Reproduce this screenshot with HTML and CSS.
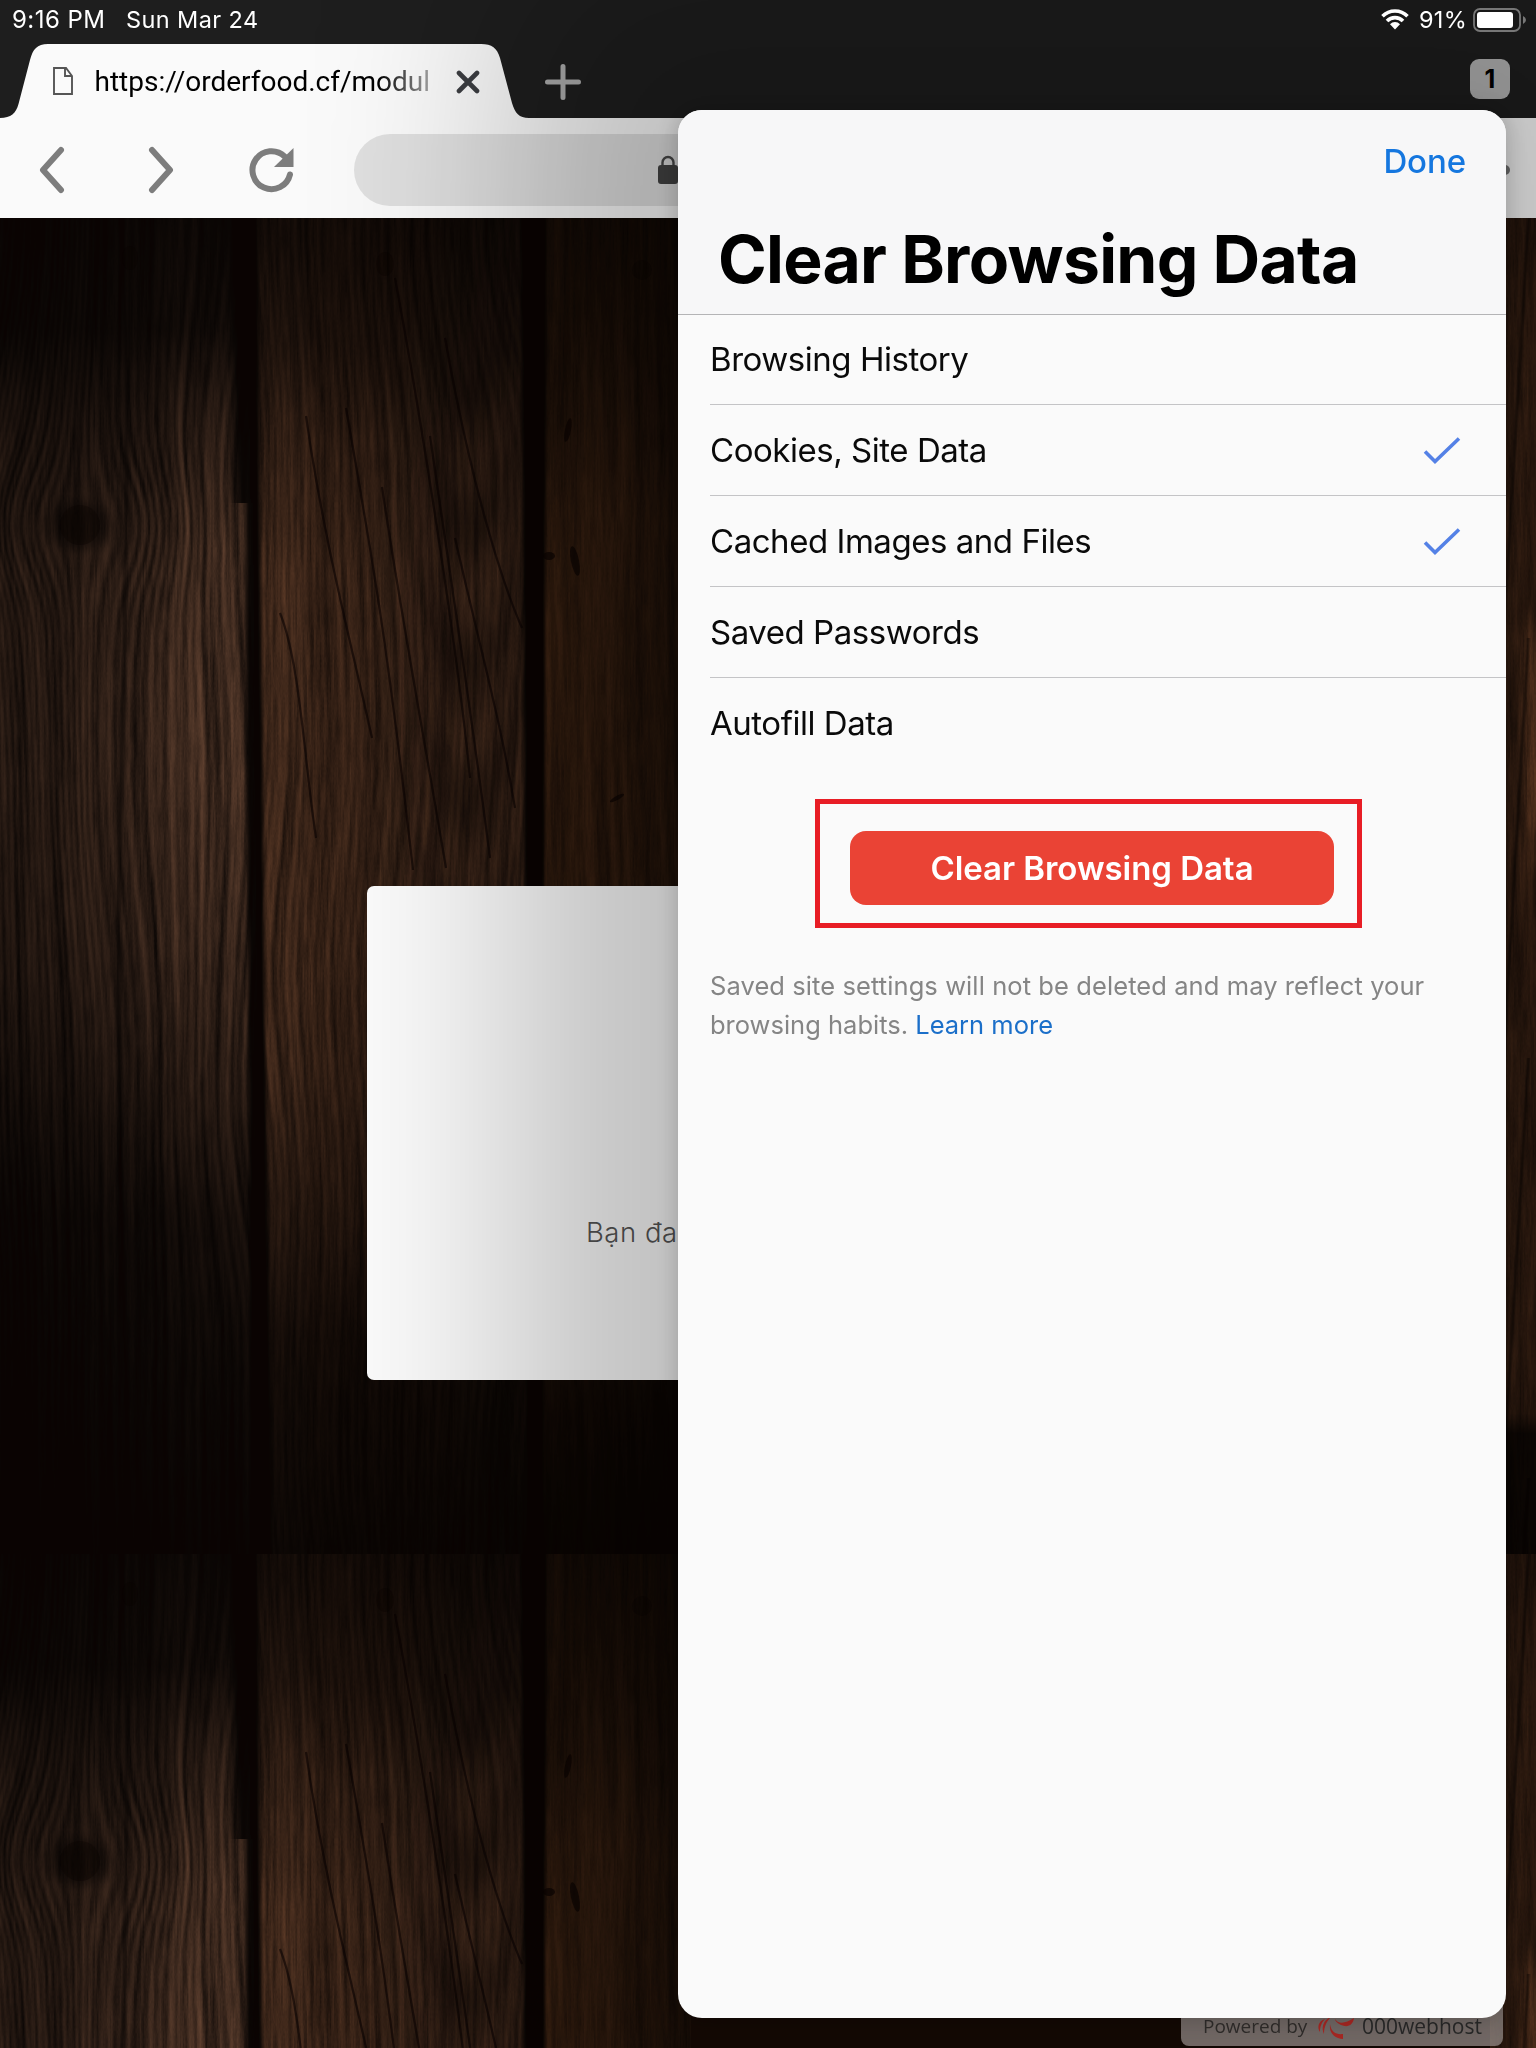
FILE: index.html
```html
<!DOCTYPE html>
<html lang="en">
<head>
<meta charset="utf-8">
<title>Clear Browsing Data</title>
<link rel="stylesheet" href="styles.css">
</head>
<body>
<div class="screen">
  <header class="chrome">
    <div class="status">
      <span class="time">9:16 PM</span>
      <span class="date">Sun Mar 24</span>
      <svg class="wifi" width="28" height="21" viewBox="0 0 28 21"><g fill="none" stroke="#fff" stroke-width="3.6"><path d="M1.5 7.2a17.6 17.6 0 0 1 25 0"/><path d="M6 12a11.2 11.2 0 0 1 16 0"/></g><path fill="#fff" d="M9 15.2a7 7 0 0 1 10 0L14 20.4z"/></svg>
      <span class="percent">91%</span>
      <svg class="battery" width="54" height="24" viewBox="0 0 54 24"><rect x="1" y="1" width="46" height="22" rx="6" fill="none" stroke="#777" stroke-width="1.8"/><rect x="4" y="4" width="36" height="16" rx="3" fill="#fff"/><path d="M50 8q3 1.500 3 4t-3 4z" fill="#777"/></svg>
    </div>
    <div class="tabs">
      <div class="tab">
        <svg class="tab-shape" width="530" height="75" viewBox="0 0 530 75"><path fill="#fafafa" d="M0 75V74C11 74 16 69 18.500 60L30 16C33 5 37 0 48 0H481C492 0 497 4 500 14L512 59C515 69 519 74 529 74V75z"/></svg>
        <svg class="doc" width="20" height="28" viewBox="0 0 20 28"><path d="M1 1h12l6 8v18H1zM12 1v8h7" fill="none" stroke="#555" stroke-width="1.9"/></svg>
        <span class="url">https://orderfood.cf/modul</span>
        <svg class="close" width="24" height="24" viewBox="0 0 24 24"><path d="M3 3l18 18M21 3L3 21" stroke="#3c3e42" stroke-width="4.600" stroke-linecap="round"/></svg>
      </div>
      <svg class="plus" width="36" height="36" viewBox="0 0 36 36"><path d="M18 2.500v31M2.500 18h31" stroke="#acacac" stroke-width="5" stroke-linecap="round"/></svg>
      <span class="count">1</span>
    </div>
    <div class="toolbar">
      <svg class="back" width="26" height="48" viewBox="0 0 26 48"><path d="M22 4L4 24l18 20" fill="none" stroke="#7d7d7d" stroke-width="6" stroke-linecap="round" stroke-linejoin="round"/></svg>
      <svg class="forward" width="26" height="48" viewBox="0 0 26 48"><path d="M4 4l18 20L4 44" fill="none" stroke="#7d7d7d" stroke-width="6" stroke-linecap="round" stroke-linejoin="round"/></svg>
      <svg class="reload" width="46" height="46" viewBox="0 0 46 46"><path d="M41 27.500A19 19 0 1 1 35.800 9.600" fill="none" stroke="#7d7d7d" stroke-width="6" stroke-linecap="round"/><path fill="#7d7d7d" d="M44.500 1v19H25z"/></svg>
      <div class="omnibox">
        <svg width="24" height="30" viewBox="0 0 24 30"><path d="M6.500 12V7.500a5.500 5.500 0 0 1 11 0V12" fill="none" stroke="#4a4a4a" stroke-width="2.400"/><rect x="2" y="10" width="20" height="19" rx="3" fill="#444"/></svg>
      </div>
      <i class="dot"></i>
    </div>
  </header>
  <main class="site">
    <canvas class="wood" width="1536" height="1830"></canvas>
    <section class="card"><p>Bạn đa</p></section>
    <div class="badge">
      <span>Powered by</span>
      <svg width="38" height="24" viewBox="0 0 38 24"><g fill="#d3322c"><path d="M8 3C1 5 0 12 3 16C3 10 5 6 8 3zM14 1C6 4 4 12 7 18C7 10 10 5 14 1z"/><path d="M13 8c-1 8 3 14 13 15l0-5C18 19 14 15 13 8z"/><path d="M18 3c3 5 10 5 19-1C36 9 31 12 24 9 20 7 18 5 18 3z"/></g></svg>
      <b>000webhost</b>
    </div>
  </main>
  <div class="dialog">
    <div class="dialog-head">
      <a class="done">Done</a>
      <h1>Clear Browsing Data</h1>
    </div>
    <ul class="options">
      <li><span>Browsing History</span></li>
      <li><span>Cookies, Site Data</span><svg width="38" height="28" viewBox="0 0 38 28"><path d="M2 15.500l10 10L36 2.500" fill="none" stroke="#5481e6" stroke-width="3.600"/></svg></li>
      <li><span>Cached Images and Files</span><svg width="38" height="28" viewBox="0 0 38 28"><path d="M2 15.500l10 10L36 2.500" fill="none" stroke="#5481e6" stroke-width="3.600"/></svg></li>
      <li><span>Saved Passwords</span></li>
      <li><span>Autofill Data</span></li>
    </ul>
    <div class="highlight"><button>Clear Browsing Data</button></div>
    <p class="note"><span class="first">Saved site settings will not be deleted and may reflect your</span><br>browsing habits. <a>Learn more</a></p>
  </div>
</div>
<script src="wood.js"></script>
</body>
</html>
```
FILE: styles.css
```css
* { box-sizing: border-box; }
body { margin: 0; font-family: Inter, "Liberation Sans", sans-serif; }
.screen { position: relative; width: 1536px; height: 2048px; overflow: hidden; background: #1e1e1e; display: flex; flex-direction: column; }
.chrome { flex: none; height: 218px; }
svg { display: block; flex: none; }

.status { position: relative; z-index: 2; height: 44px; display: flex; align-items: flex-start; color: #fff; font-size: 23px; line-height: 28px; padding: 6px 9px 0 12px; white-space: nowrap; }
.time { width: 114px; font-size: 24px; letter-spacing: 0.450px; }
.date { font-size: 23.500px; letter-spacing: 0.400px; }
.wifi { margin: 3px 10px 0 auto; }
.percent { width: 54px; font-size: 23.500px; letter-spacing: 0.300px; }
.battery { margin-top: 2px; }

.tabs { height: 74px; display: flex; align-items: flex-start; }
.tab { position: relative; width: 530px; height: 74px; display: flex; align-items: flex-start; padding-left: 53px; }
.tab-shape { position: absolute; left: 0; top: 0; }
.doc, .url, .close { position: relative; }
.doc { margin: 23px 21.500px 0 0; }
.url { width: 337.500px; font: 28px/34px Roboto, sans-serif; margin-top: 21px; white-space: nowrap; overflow: hidden; background: linear-gradient(90deg, #000 84%, #aaa 100%); background-clip: text; -webkit-background-clip: text; color: transparent; }
.close { margin: 26px 0 0 24px; }
.plus { margin: 20px 0 0 15px; }
.count { margin: 15px 26px 0 auto; width: 40px; height: 40px; border-radius: 9px; background: #b4b4b4; color: #000; font-size: 25px; font-weight: 700; line-height: 40px; text-align: center; }

.toolbar { height: 100px; background: #fafafa; display: flex; align-items: center; padding: 4px 0 0 39px; }
.forward { margin-left: 83px; }
.reload { margin-left: 75px; }
.omnibox { width: 1090px; height: 72px; margin-left: 59px; border-radius: 36px; background: #e0e0e0; display: flex; align-items: center; padding-left: 302px; }
.dot { width: 10px; height: 10px; border-radius: 5px; background: #777; margin-left: 56px; }

.site { position: relative; flex: 1; display: flex; flex-direction: column; align-items: center; background: #180b05; }
.wood { position: absolute; left: 0; top: 0; }
.card { position: relative; flex: none; width: 802px; height: 494px; margin-top: 668px; border-radius: 7px; background: #fcfcfc; padding: 328px 0 0 219px; }
.card p { margin: 0; font-size: 27.500px; font-weight: 300; line-height: 36px; color: #555; letter-spacing: 0.500px; }
.badge { position: absolute; right: 33px; bottom: 2px; width: 322px; height: 52px; border-radius: 8px; background: rgba(200, 190, 186, .68); display: flex; align-items: flex-end; padding: 0 0 6px 22px; font: 19px/28px "Open Sans", sans-serif; color: #3c3836; white-space: nowrap; }
.badge span { width: 114px; }
.badge b { margin-left: 7px; font-weight: 500; font-size: 21px; color: #333; }

.dialog { position: absolute; left: 678px; top: 110px; width: 828px; height: 1908px; border-radius: 24px; background: #fafafa; box-shadow: 0 0 200px 170px rgba(0, 0, 0, .235), 0 0 24px rgba(0, 0, 0, .22); }
.dialog-head { height: 205px; border-radius: 24px 24px 0 0; background: #f7f7f8; border-bottom: 1px solid #b4b4b6; display: flex; flex-direction: column; padding: 31px 40px 0 40px; }
.done { align-self: flex-end; font-size: 33px; line-height: 40px; font-weight: 550; color: #1577df; letter-spacing: -0.100px; }
h1 { margin: 38px 0 0; font-size: 66px; line-height: 80px; font-weight: 700; letter-spacing: -0.720px; color: #000; white-space: nowrap; }
.options { list-style: none; margin: 0; padding: 0 0 0 32px; }
.options li { height: 91px; display: flex; align-items: center; justify-content: space-between; padding: 0 45px 1px 0; border-bottom: 1px solid #c4c4c6; font-size: 33px; color: #0a0a0a; white-space: nowrap; letter-spacing: -0.460px; }
.options li:first-child { height: 90px; }
.options li:last-child { border: 0; padding-bottom: 2px; }
.highlight { width: 547px; height: 129px; margin: 30px 0 0 137px; border: 5px solid #e81d25; padding: 27px 0 0 30px; }
.highlight button { display: block; width: 484px; height: 74px; border: 0; border-radius: 16px; background: #ea4335; color: #fff; font: 600 33px/75px Inter, sans-serif; padding: 0; letter-spacing: -0.050px; }
.note { margin: 38px 0 0 32px; font-size: 25.500px; line-height: 39px; color: #858585; white-space: nowrap; }
.first { letter-spacing: 0.085px; }
.note a { color: #1b6fc9; }
```
FILE: wood.js
```js
// Paints the plank wallpaper: one 1336px tall tile, repeated down the page.
(function () {
  var W = 1536, H = 1336, H_PAGE = 1830;
  var ctx = document.querySelector('.wood').getContext('2d');

  function hash(x, y) {
    var h = (x * 374761393 + y * 668265263) | 0;
    h = Math.imul(h ^ (h >>> 13), 1274126177);
    return ((h ^ (h >>> 16)) >>> 0) / 4294967295;
  }
  function noise(x, y) {
    var xi = Math.floor(x), yi = Math.floor(y), fx = x - xi, fy = y - yi;
    fx = fx * fx * (3 - 2 * fx); fy = fy * fy * (3 - 2 * fy);
    var a = hash(xi, yi), b = hash(xi + 1, yi), c = hash(xi, yi + 1), d = hash(xi + 1, yi + 1);
    return a + (b - a) * fx + (c - a) * fy + (a - b - c + d) * fx * fy;
  }
  function ramp(v, stops) {
    if (v <= stops[0][0]) return stops[0][1];
    for (var i = 1; i < stops.length; i++) {
      if (v < stops[i][0]) {
        var p = stops[i - 1], q = stops[i];
        return p[1] + (q[1] - p[1]) * (v - p[0]) / (q[0] - p[0]);
      }
    }
    return stops[stops.length - 1][1];
  }
  function sm(a, b, v) { v = Math.min(1, Math.max(0, (v - a) / (b - a))); return v * v * (3 - 2 * v); }

  var img = ctx.createImageData(W, H), px = img.data;
  var bright1 = [[0, .18], [110, .26], [200, .6], [330, .95], [560, .95], [720, .8], [850, .6], [1000, .28], [1336, .1]];
  var bright2 = [[0, .32], [120, .48], [230, .8], [350, .98], [700, .98], [850, .85], [980, .6], [1120, .32], [1336, .18]];
  var bright3 = [[0, .45], [150, .65], [300, 1], [660, 1], [900, .75], [1100, .5], [1200, .32], [1336, .18]];

  for (var y = 0; y < H; y++) {
    var step = y < 285;
    var l1 = step ? 236 + y * .018 : 246 + (y - 285) * .006;
    var r1 = 256 + y * .0105, l2 = 522 + y * .005, r2 = 545 - y * .003;
    for (var x = 0; x < W; x++) {
      if (x > 690 && x < 1490) continue;
      var r, g, b, k, u, v, t;
      var fine = noise(x * .7, y * .045) * .5 + noise(x * 1.3, y * .4) * .2;
      if (x < (l1 + r1) / 2) {
        var dx = x - 80, dy = y - 307;
        u = x - dx * .62 * Math.exp(-(dx * dx / 6400 + dy * dy / 4200));
        u += (noise(x * .008, y * .0035) - .5) * 40 + Math.sin(y / 230 + x / 90) * 5;
        t = Math.sin(u * (x < 95 ? .95 : .68)) * .5 + .5;
        v = .55 + t * .25 + (noise(u * .16, y * .004) - .5) * .5 + (fine - .35) * .5;
        k = Math.sqrt(dx * dx + dy * dy * 1.500);
        v *= .55 + .45 * sm(16, 42, k);
        k = v * ramp(y, bright1) * ramp(x, [[0, .58], [90, .7], [170, .95], [245, 1.1]]);
        k *= 1 - .85 * sm(l1 - (step ? 14 : 5), l1 + 3, x);
        k *= 1 - .4 * Math.exp(-Math.pow((x - 122 - Math.sin(y / 160) * 4) / 2.5, 2));
        r = 89; g = 61; b = 45;
      } else if (x < (l2 + r2) / 2) {
        u = x + (noise(x * .009 + 9, y * .004) - .5) * 44 + Math.sin(y / 120 + x / 60) * 3;
        t = Math.sin(u * .74) * .5 + .5;
        v = .62 + t * .16 + (noise(u * .15 + 40, y * .005) - .5) * .35 + (fine - .35) * .5;
        var ax = x - 468, ring = Math.sin((y + ax * ax * .035) / 22) * .5 + .5;
        v *= 1 - .3 * ring * Math.exp(-ax * ax / 3000) * sm(60, 220, y) * (1 - sm(690, 850, y));
        k = v * ramp(y, bright2) * ramp(x, [[260, 1.08], [350, .94], [450, .8], [520, .8]]);
        k *= sm(r1 - 4, r1 + 4, x) * .94 + .06;
        k *= 1 - .9 * sm(l2 - 5, l2 + 3, x);
        r = 81; g = 52; b = 35;
      } else if (x < 700) {
        u = x + (noise(x * .01 + 30, y * .004) - .5) * 30;
        v = .68 + Math.sin(u * .5) * .05 + (noise(u * .14, y * .005) - .5) * .3 + (fine - .35) * .4;
        k = v * ramp(y, bright3) * ramp(x, [[545, 1], [620, .9], [680, .62]]);
        k *= sm(r2 - 3, r2 + 4, x) * .94 + .06;
        r = 66; g = 39; b = 21;
      } else {
        v = .75 + (noise(x * .2, y * .012) - .5) * .3 + (fine - .35) * .5;
        v *= 1 + .7 * sm(1514, 1530, x) * sm(380, 430, y) * (1 - sm(560, 700, y));
        t = Math.abs(x - (1528 - (y % 420) * .06));
        v *= .6 + .4 * sm(0, 3, t);
        k = v * ramp(y, [[0, .65], [200, .85], [1150, .8], [1195, .7], [1215, .22], [1336, .22]]);
        r = 80; g = 48; b = 29;
      }
      var o = (y * W + x) * 4;
      px[o] = Math.max(10, r * k); px[o + 1] = Math.max(3, g * k - 1); px[o + 2] = Math.max(2, b * k - 1); px[o + 3] = 255;
    }
  }

  var cracks = [
    [395, 60, 422, 205, 457, 428, 470, 560], [306, 198, 324, 326, 355, 441, 372, 520],
    [346, 190, 373, 345, 386, 415, 413, 652], [430, 218, 455, 390, 471, 492, 490, 640],
    [382, 269, 400, 390, 424, 520, 446, 650], [280, 395, 300, 445, 304, 540, 316, 620],
    [445, 120, 470, 260, 500, 360, 522, 410], [455, 320, 480, 430, 500, 500, 515, 590]
  ];
  function details(top) {
    ctx.strokeStyle = 'rgba(8,2,2,.6)';
    ctx.lineWidth = 2.2;
    cracks.forEach(function (c) {
      ctx.beginPath(); ctx.moveTo(c[0], c[1] + top);
      ctx.bezierCurveTo(c[2], c[3] + top, c[4], c[5] + top, c[6], c[7] + top); ctx.stroke();
    });
    ctx.fillStyle = 'rgba(10,3,1,.8)';
    [[575, 343, 4, 15, -.2], [568, 212, 3, 12, .2], [549, 338, 6, 4, 0], [617, 580, 8, 2, -.5],
      [642, 52, 10, 10, 0], [130, 40, 8, 12, 0], [385, 46, 9, 12, 0], [80, 307, 20, 20, 0]].forEach(function (e, i) {
      ctx.globalAlpha = i > 3 ? .4 : .85;
      ctx.beginPath(); ctx.ellipse(e[0], e[1] + top, e[2], e[3], e[4], 0, 7); ctx.fill();
    });
    ctx.globalAlpha = 1;
  }
  for (var top = 0; top < H_PAGE; top += H) { ctx.putImageData(img, 0, top); details(top); }
})();
```
